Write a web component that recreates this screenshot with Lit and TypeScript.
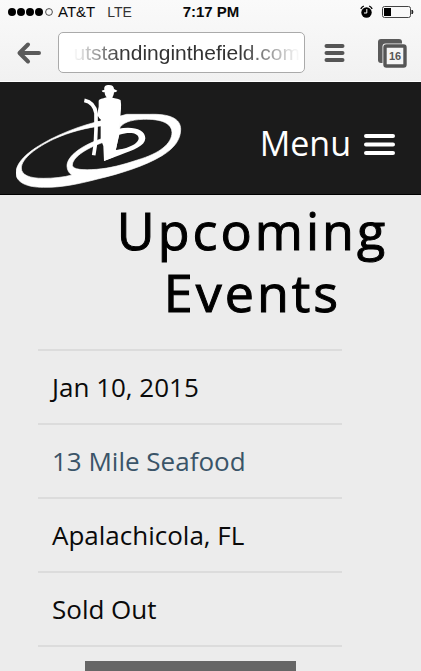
import { LitElement, html, css, svg } from "lit";
import { customElement } from "lit/decorators.js";

const logo = svg`
  <path fill="#fff" stroke="#fff" stroke-width="2" d="M308 134C245 146 160 180 106 216C66 243 48 268 48 291C48 320 82 334 130 334C184 335 235 324 293 309C360 293 435 270 486 239C526 215 542 188 542 160C542 128 510 113 448 115L380 115C372 117 366 119 358 121L358 158C366 141 390 131 430 130C486 128 516 143 516 170C515 203 480 232 412 252C370 266 330 277 290 280C250 283 218 281 217 268C217 247 250 220 312 198L312 186C250 205 200 239 201 271C202 284 207 292 216 297C190 304 160 307 130 307C88 307 64 297 64 276C65 247 110 214 160 190C210 167 260 155 308 149Z"/>
  <path fill="#fff" fill-rule="evenodd" d="M354 158C400 149 436 160 436 187C435 210 402 222 360 237L312 255L312 222L340 222ZM358 176L347 222C382 219 416 204 416 187C416 172 392 166 358 176Z"/>
  <path fill="#fff" d="M305 44L313 41C311 31 317 27 327 27C337 27 342 32 342 39L352 44C350 48 345 49 342 49C342 57 338 62 337 65C346 67 358 68 362 73C365 90 362 112 360 134C360 170 354 190 349 216L340 244L312 255L310 210L302 190L302 130C292 124 292 108 296 92L296 74C300 67 314 67 320 64C316 60 314 55 314 49C310 49 306 47 305 44Z"/>
  <path fill="none" stroke="#fff" stroke-width="11" d="M253 73C273 77 285 92 288 112L288 160L286 206L281 238"/>
  <path fill="none" stroke="#fff" stroke-width="8" d="M286 116L304 118M286 140L304 140"/>`;

@customElement("app-root")
export class AppRoot extends LitElement {
  static styles = css`
    :host {
      display: flex;
      flex-direction: column;
      min-height: 100vh;
      background: #ececec;
      color: #0a0a0a;
      font-family: "Open Sans", "Noto Sans", sans-serif;
    }
    svg { display: block; flex: none; }
    button {
      display: flex;
      align-items: center;
      margin: 0;
      padding: 0;
      border: 0;
      background: none;
      color: inherit;
      font: inherit;
    }
    .browser {
      background: linear-gradient(#fafafa, #f1f1f1);
      border-bottom: 1px solid #fff;
      font-family: "Liberation Sans", Arial, sans-serif;
    }
    .status {
      display: grid;
      grid-template-columns: 1fr auto 1fr;
      align-items: center;
      height: 24px;
      padding: 0 7px 0 8px;
      font-size: 15px;
      line-height: 24px;
    }
    .carrier { display: flex; align-items: center; gap: 4px; }
    .network { padding-left: 8px; font-size: 14px; color: #333; }
    .time { font-weight: bold; }
    .power { display: flex; align-items: center; justify-content: flex-end; gap: 8px; }
    .toolbar {
      display: flex;
      align-items: center;
      height: 41px;
      padding: 8px 14px 8px 16px;
    }
    .address {
      flex: 1;
      min-width: 0;
      height: 41px;
      box-sizing: border-box;
      margin: 0 19px 0 17px;
      padding: 0 4px;
      border: 1px solid #aaa;
      border-radius: 5px;
      background: #fff;
    }
    .url {
      display: block;
      width: 100%;
      height: 39px;
      padding: 0;
      border: 0;
      outline: 0;
      background: none;
      color: #333;
      font: 21px "Liberation Sans", Arial, sans-serif;
      text-align: right;
      -webkit-mask-image: linear-gradient(to right, transparent 10px, #000 60px, #000 calc(100% - 60px), transparent);
      mask-image: linear-gradient(to right, transparent 10px, #000 60px, #000 calc(100% - 60px), transparent);
    }
    .tabs { margin-left: 32px; }
    .site {
      display: flex;
      align-items: flex-start;
      justify-content: space-between;
      height: 113px;
      box-sizing: border-box;
      padding: 2px 26px 0 16px;
      background: #1b1b1b;
      border-bottom: 1px solid #000;
      color: #fff;
    }
    .menu {
      gap: 13px;
      height: 117px;
      font-size: 34px;
      line-height: 46px;
    }
    main { display: flex; flex: 1; flex-direction: column; }
    h1 {
      margin: 0 0 0 84px;
      padding: 4px 0 26px;
      font-size: 52px;
      font-weight: 500;
      line-height: 62px;
      letter-spacing: 3px;
      text-align: center;
      color: #000;
      -webkit-text-stroke: 1px #000;
    }
    .events {
      margin: 0 79px 0 38px;
      padding: 0;
      border-top: 2px solid #dcdcdc;
      list-style: none;
    }
    .events li {
      padding: 18px 14px;
      border-bottom: 2px solid #dcdcdc;
      font-size: 26px;
      line-height: 36px;
    }
    .events a { color: #3a5468; text-decoration: none; }
    .panel {
      flex: 1;
      margin: 14px 125px 0 85px;
      background: #666;
    }
  `;

  private details = [
    { text: "Jan 10, 2015" },
    { text: "13 Mile Seafood", link: true },
    { text: "Apalachicola, FL" },
    { text: "Sold Out" },
  ];

  render() {
    return html`
      <div class="browser">
        <div class="status">
          <div class="carrier">
            <svg width="46" height="10" viewBox="0 0 46 10" aria-hidden="true">
              ${[4, 13, 22, 31].map((x) => svg`<circle cx=${x} cy="5" r="4" fill="#000"/>`)}
              <circle cx="41" cy="5" r="3.4" fill="none" stroke="#222" stroke-width="0.8"/>
            </svg>
            <span>AT&amp;T</span><span class="network">LTE</span>
          </div>
          <span class="time">7:17 PM</span>
          <div class="power">
            <svg width="13" height="14" viewBox="0 0 13 14" aria-hidden="true">
              <circle cx="6.5" cy="7.5" r="5.2" fill="#000"/>
              <path d="M.8 3.8A8 8 0 0 1 3.8 1M9.2 1A8 8 0 0 1 12.2 3.8" fill="none" stroke="#000" stroke-width="1.4"/>
              <path d="M6.8 4V8H4" fill="none" stroke="#fff"/>
            </svg>
            <svg width="33" height="14" viewBox="0 0 33 14" aria-hidden="true">
              <rect x="1.5" y="1.5" width="28" height="11" rx="2" fill="none" stroke="#444"/>
              <rect x="3" y="3" width="7" height="8" fill="#000"/>
              <path d="M31 5Q33 7 31 9Z" fill="#222" stroke="#222"/>
            </svg>
          </div>
        </div>
        <div class="toolbar">
          <button aria-label="Back">
            <svg width="25" height="24" viewBox="0 0 25 24">
              <path d="M12 3.5L3.5 12L12 20.5M4 12H23" fill="none" stroke="#5a5a5a" stroke-width="4" stroke-linecap="round" stroke-linejoin="round"/>
            </svg>
          </button>
          <div class="address">
            <input class="url" type="text" aria-label="Address" .value=${"utstandinginthefield.com"} />
          </div>
          <button aria-label="Browser menu">
            <svg width="21" height="20" viewBox="0 0 21 20">
              <path d="M2.5 3H18.5M2.5 10H18.5M2.5 17H18.5" stroke="#555" stroke-width="4" stroke-linecap="round"/>
            </svg>
          </button>
          <button class="tabs" aria-label="16 open tabs">
            <svg width="30" height="30" viewBox="0 0 30 30">
              <rect x="1" y="1" width="24" height="24" rx="3" fill="#5a5a5a"/>
              <rect x="5.5" y="5.5" width="24" height="24" rx="3" fill="#f3f3f3"/>
              <rect x="8" y="8" width="20" height="20" rx="1.5" fill="#f5f5f5" stroke="#555" stroke-width="3.4"/>
              <text x="18" y="22" text-anchor="middle" font-family="Liberation Sans" font-size="11" font-weight="bold" fill="#555">16</text>
            </svg>
          </button>
        </div>
      </div>
      <header class="site">
        <svg width="166" height="104" viewBox="48 24 498 312" role="img" aria-label="Outstanding in the Field">${logo}</svg>
        <button class="menu">
          Menu
          <svg width="31" height="24" viewBox="0 0 31 24" aria-hidden="true">
            <path d="M2 5H29M2 13.5H29M2 22H29" stroke="#fff" stroke-width="4" stroke-linecap="round"/>
          </svg>
        </button>
      </header>
      <main>
        <h1>Upcoming Events</h1>
        <ul class="events">
          ${this.details.map((d) => html`<li>${d.link ? html`<a href="#">${d.text}</a>` : d.text}</li>`)}
        </ul>
        <div class="panel"></div>
      </main>
    `;
  }
}
